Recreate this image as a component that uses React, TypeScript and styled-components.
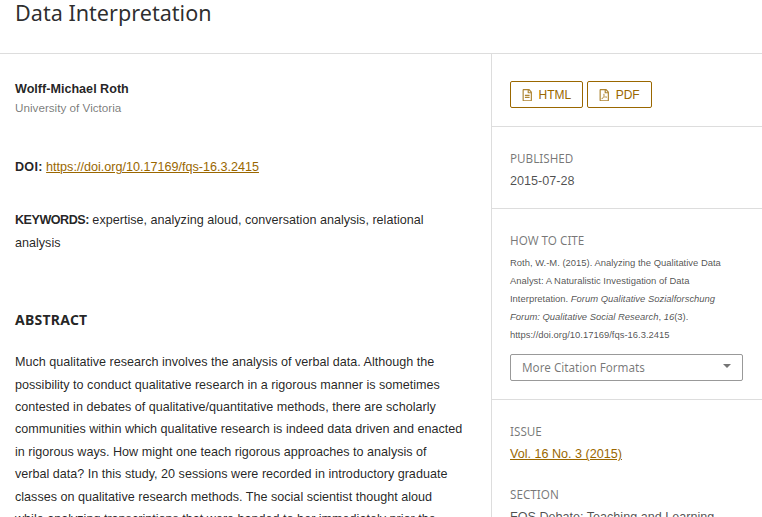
import { createGlobalStyle } from "styled-components";
import styled from "styled-components";
import { FaRegFileAlt, FaRegFilePdf } from "react-icons/fa";

const GlobalStyle = createGlobalStyle`
  html, body {
    margin: 0;
    padding: 0;
    background: #fff;
  }
  body {
    font-family: "Liberation Sans", Arial, sans-serif;
    font-size: 12.6px;
    line-height: 22.4px;
    color: rgba(0, 0, 0, 0.87);
  }
`;

const Page = styled.div`
  width: 762px;
  height: 517px;
  overflow: hidden;
`;

const Header = styled.header`
  height: 53px;
  border-bottom: 1px solid #ddd;
  padding-left: 15px;
`;

const Title = styled.h1`
  margin: 0;
  font-family: "Noto Sans", sans-serif;
  font-size: 21.6px;
  font-weight: 400;
  line-height: 26px;
  color: rgba(0, 0, 0, 0.84);
`;

const Columns = styled.div`
  display: flex;
`;

const Main = styled.main`
  width: 491px;
  box-sizing: border-box;
  padding: 25px 28px 0 15px;
  flex-shrink: 0;
`;

const Aside = styled.aside`
  flex: 1;
  border-left: 1px solid #ddd;
`;

const Author = styled.div`
  font-weight: 700;
  line-height: 20px;
`;

const Affiliation = styled.div`
  font-size: 11.7px;
  line-height: 18px;
  color: rgba(0, 0, 0, 0.54);
`;

const Doi = styled.p`
  margin: 39px 0 0;
`;

const Keywords = styled.p`
  margin: 31px 0 0;
`;

const Label = styled.strong`
  font-weight: 700;
  letter-spacing: ${(p: { $spacing?: string }) => p.$spacing || "normal"};
`;

const Link = styled.a`
  color: #9a6700;
  text-decoration: underline;
`;

const Heading = styled.h2`
  margin: 55px 0 0;
  font-family: "Noto Sans", sans-serif;
  font-size: 14px;
  font-weight: 700;
  line-height: 22px;
  letter-spacing: 0.25px;
`;

const Abstract = styled.p`
  margin: 20px 0 0;
`;

const Section = styled.section`
  padding: 21px 18px 16px;
  border-bottom: 1px solid #ddd;
`;

const GalleySection = styled(Section)`
  padding: 27px 18px 18px;
`;

const CiteSection = styled(Section)`
  padding-bottom: 18px;
`;

const Galleys = styled.div`
  display: flex;
  gap: 4px;
`;

const GalleyButton = styled.a`
  display: flex;
  align-items: center;
  gap: 5px;
  box-sizing: border-box;
  height: 27px;
  padding: 1px 11px 0 10px;
  border: 1px solid #9a6700;
  border-radius: 2px;
  font-size: 12px;
  color: #9a6700;
  text-decoration: none;
  svg {
    font-size: 12.5px;
    opacity: 0.8;
  }
`;

const MetaLabel = styled.div`
  font-family: "Noto Sans", sans-serif;
  font-size: 11.7px;
  line-height: 20px;
  color: rgba(0, 0, 0, 0.54);
`;

const MetaValue = styled.div`
  margin-top: 2px;
  line-height: 22px;
  color: rgba(0, 0, 0, 0.7);
`;

const Citation = styled.div`
  margin-top: 4px;
  font-size: 9.45px;
  line-height: 18px;
  color: rgba(0, 0, 0, 0.7);
`;

const CiteSelect = styled.div`
  display: flex;
  align-items: center;
  justify-content: space-between;
  box-sizing: border-box;
  width: 233px;
  height: 27px;
  margin-top: 10px;
  padding: 0 11px;
  border: 1px solid rgba(0, 0, 0, 0.4);
  border-radius: 2px;
  font-family: "Noto Sans", sans-serif;
  font-size: 11.7px;
  color: rgba(0, 0, 0, 0.54);
`;

const Caret = styled.span`
  width: 0;
  height: 0;
  margin-bottom: 3px;
  border-left: 4px solid transparent;
  border-right: 4px solid transparent;
  border-top: 4px solid rgba(0, 0, 0, 0.54);
`;

const MetaBlock = styled.div`
  margin-bottom: 19px;
`;

export default function App() {
  return (
    <Page>
      <GlobalStyle />
      <Header>
        <Title>Data Interpretation</Title>
      </Header>
      <Columns>
        <Main>
          <Author>Wolff-Michael Roth</Author>
          <Affiliation>University of Victoria</Affiliation>
          <Doi>
            <Label $spacing="0.25px">DOI:</Label>{" "}
            <Link href="#">https://doi.org/10.17169/fqs-16.3.2415</Link>
          </Doi>
          <Keywords>
            <Label $spacing="-0.5px">KEYWORDS:</Label> expertise, analyzing
            aloud, conversation analysis, relational analysis
          </Keywords>
          <Heading>ABSTRACT</Heading>
          <Abstract>
            Much qualitative research involves the analysis of verbal data.
            Although the possibility to conduct qualitative research in a
            rigorous manner is sometimes contested in debates of
            qualitative/quantitative methods, there are scholarly communities
            within which qualitative research is indeed data driven and enacted
            in rigorous ways. How might one teach rigorous approaches to
            analysis of verbal data? In this study, 20 sessions were recorded in
            introductory graduate classes on qualitative research methods. The
            social scientist thought aloud while analyzing transcriptions that
            were handed to her immediately prior the
          </Abstract>
        </Main>
        <Aside>
          <GalleySection>
            <Galleys>
              <GalleyButton href="#">
                <FaRegFileAlt /> HTML
              </GalleyButton>
              <GalleyButton href="#">
                <FaRegFilePdf /> PDF
              </GalleyButton>
            </Galleys>
          </GalleySection>
          <Section>
            <MetaLabel>PUBLISHED</MetaLabel>
            <MetaValue>2015-07-28</MetaValue>
          </Section>
          <CiteSection>
            <MetaLabel>HOW TO CITE</MetaLabel>
            <Citation>
              Roth, W.-M. (2015). Analyzing the Qualitative Data Analyst: A
              Naturalistic Investigation of Data Interpretation.{" "}
              <em>
                Forum Qualitative Sozialforschung Forum: Qualitative Social
                Research
              </em>
              , <em>16</em>(3). https://doi.org/10.17169/fqs-16.3.2415
            </Citation>
            <CiteSelect>
              More Citation Formats
              <Caret />
            </CiteSelect>
          </CiteSection>
          <Section>
            <MetaBlock>
              <MetaLabel>ISSUE</MetaLabel>
              <MetaValue>
                <Link href="#">Vol. 16 No. 3 (2015)</Link>
              </MetaValue>
            </MetaBlock>
            <MetaLabel>SECTION</MetaLabel>
            <MetaValue>FOS Debate: Teaching and Learning</MetaValue>
          </Section>
        </Aside>
      </Columns>
    </Page>
  );
}
